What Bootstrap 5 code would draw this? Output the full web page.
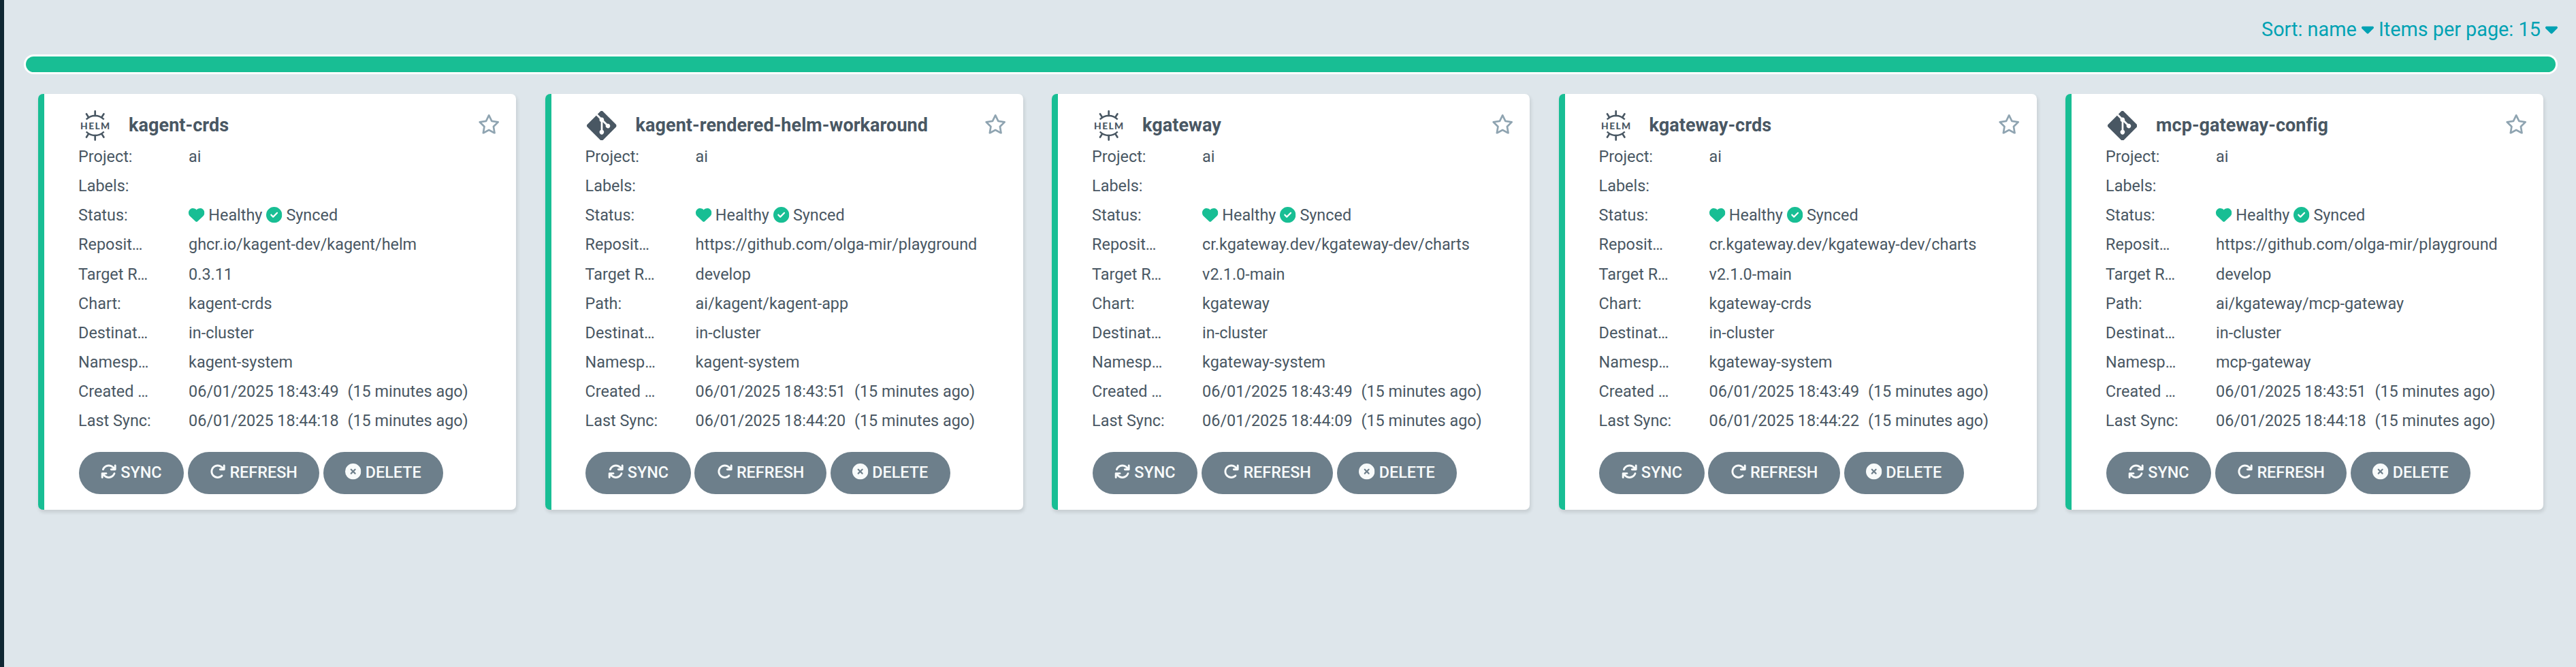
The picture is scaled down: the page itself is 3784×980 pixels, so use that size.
<!DOCTYPE html>
<html lang="en">
<head>
<meta charset="utf-8">
<meta name="viewport" content="width=device-width, initial-scale=1">
<title>Applications</title>
<link rel="stylesheet" href="https://cdn.jsdelivr.net/npm/bootstrap@5.3.0/dist/css/bootstrap.min.css">
<style>
  :root { --ink: #495763; --ok: #18be94; --accent: #00a2b3; --muted: #6d7f8b; --canvas: #dee6eb; }
  body { font-family: Roboto, sans-serif; font-size: 23.4px; line-height: 43.13px; color: var(--ink); background: var(--canvas); }
  .app-shell { height: 980px; overflow: hidden; }
  .side-rail { width: 6px; background: #0f2733; }
  .main-pane { padding: 0 27px 0 29.3px; }
  .list-tools { height: 80px; padding-top: 6px; font-size: 28.8px; line-height: 74px; color: var(--accent); }
  .list-tools a { color: inherit; }
  .fa-icon { height: 1em; width: 1em; vertical-align: -.125em; fill: currentColor; overflow: visible; }
  .fa-caret { width: .625em; }
  .health-bar { height: 29px; padding: 3px; background: #fff; border-radius: 15px; margin-bottom: 29px; }
  .health-bar .progress-bar { background: var(--ok); border-radius: 12px; }
  .tiles { display: grid; grid-template-columns: repeat(5, 702px); column-gap: 42.5px; padding-left: 20.8px; }
  .app-tile { height: 611px; border: 0; border-left: 9px solid var(--ok); border-radius: 7.2px; color: inherit; box-shadow: 1.8px 3.6px 5.4px rgba(0, 0, 0, .1); padding: 0 24px 0 50px; }
  .tile-head { height: 71px; padding-top: 18.6px; }
  .kind-slot { width: 74px; padding: 3px 0 0 2px; }
  .kind-slot svg { display: block; width: 45px; height: 45px; }
  .kind-slot svg.git-mark { width: 43.6px; height: 43.6px; margin: .7px; }
  .tile-name { font-size: 27px; font-weight: 700; line-height: 32px; letter-spacing: .05px; padding-top: 2px; }
  .fav { width: 32.4px; height: 28.8px; fill: #8fa4b1; }
  .field-name { width: 162px; }
  .ago { margin-left: 1.2px; }
  .ok-icon { color: var(--ok); }
  .tile-actions { gap: 5.8px; padding: 23.7px 0 0 .6px; }
  .act { --bs-btn-color: #f8fbfb; --bs-btn-bg: var(--muted); --bs-btn-border-width: 0; --bs-btn-font-size: 23.4px; --bs-btn-font-weight: 500; --bs-btn-padding-x: 32.4px; --bs-btn-padding-y: 0; --bs-btn-border-radius: 31px; --bs-btn-line-height: 57.8px; height: 61.8px; white-space: nowrap; }
</style>
</head>
<body>
<svg class="d-none" xmlns="http://www.w3.org/2000/svg">
  <symbol id="heart" viewBox="0 0 512 512"><path d="M47.6 300.4L228.3 469.1c7.5 7 17.4 10.9 27.7 10.9s20.2-3.9 27.7-10.9L464.4 300.4c30.4-28.3 47.6-68 47.6-109.5v-5.8c0-69.9-50.5-129.5-119.4-141C347 36.500 300.600 51.400 268 84L256 96 244 84c-32.600-32.600-79-47.500-124.600-39.900C50.500 55.600 0 115.200 0 185.100v5.800c0 41.500 17.200 81.200 47.600 109.500z"/></symbol>
  <symbol id="check" viewBox="0 0 512 512"><path d="M256 512A256 256 0 1 0 256 0a256 256 0 1 0 0 512zM369 209L241 337c-9.400 9.400-24.600 9.400-33.900 0l-64-64c-9.400-9.400-9.400-24.600 0-33.900s24.600-9.400 33.900 0l47 47L335 175c9.400-9.400 24.600-9.400 33.900 0s9.400 24.600 0 33.900z"/></symbol>
  <symbol id="xmark" viewBox="0 0 512 512"><path d="M256 512A256 256 0 1 0 256 0a256 256 0 1 0 0 512zM175 175c9.400-9.400 24.600-9.400 33.900 0l47 47 47-47c9.400-9.400 24.600-9.400 33.900 0s9.400 24.600 0 33.900l-47 47 47 47c9.400 9.400 9.400 24.600 0 33.900s-24.600 9.400-33.900 0l-47-47-47 47c-9.400 9.400-24.600 9.400-33.900 0s-9.400-24.600 0-33.900l47-47-47-47c-9.400-9.400-9.400-24.600 0-33.900z"/></symbol>
  <symbol id="refresh" viewBox="0 0 512 512"><path d="M386.300 160H336c-17.700 0-32 14.300-32 32s14.300 32 32 32H464c17.700 0 32-14.300 32-32V64c0-17.700-14.300-32-32-32s-32 14.300-32 32v51.200L414.400 97.600c-87.500-87.500-229.300-87.500-316.800 0s-87.500 229.300 0 316.800s229.300 87.500 316.800 0c12.500-12.500 12.500-32.800 0-45.300s-32.800-12.500-45.300 0c-62.500 62.500-163.800 62.500-226.300 0s-62.500-163.800 0-226.300s163.800-62.500 226.300 0L386.300 160z"/></symbol>
  <symbol id="sync" viewBox="0 0 512 512"><path d="M105.100 202.600c7.700-21.800 20.200-42.300 37.800-59.800c62.500-62.500 163.800-62.500 226.300 0L386.300 160H336c-17.700 0-32 14.300-32 32s14.300 32 32 32H463.900c17.700 0 32-14.300 32-32V64c0-17.700-14.300-32-32-32s-32 14.300-32 32v51.200L414.400 97.600c-87.500-87.500-229.300-87.500-316.800 0C73.200 122 55.600 150.700 44.800 181.400c-5.900 16.700 2.900 34.900 19.500 40.800s34.900-2.900 40.800-19.500zM39 289.300c-5 1.500-9.800 4.200-13.700 8.200c-4 4-6.700 8.800-8.100 14c-.3 1.200-.6 2.500-.8 3.800c-.3 1.700-.4 3.400-.4 5.100V448c0 17.700 14.300 32 32 32s32-14.300 32-32V396.900l17.600 17.500c87.500 87.400 229.300 87.400 316.700 0c24.400-24.400 42.100-53.100 52.900-83.700c5.900-16.700-2.900-34.900-19.500-40.800s-34.900 2.900-40.800 19.500c-7.700 21.800-20.200 42.300-37.800 59.800c-62.500 62.500-163.800 62.500-226.300 0l-.1-.1L125.600 352H176c17.700 0 32-14.300 32-32s-14.300-32-32-32H48.400c-1.600 0-3.200 .1-4.800 .3s-3.100 .5-4.600 1z"/></symbol>
  <symbol id="caret" viewBox="0 0 320 512"><path d="M137.400 374.600c12.500 12.500 32.800 12.500 45.300 0l128-128c9.200-9.200 11.900-22.900 6.900-34.900s-16.600-19.800-29.600-19.800L32 192c-12.900 0-24.600 7.800-29.600 19.800s-2.200 25.700 6.900 34.900l128 128z"/></symbol>
  <symbol id="star" viewBox="0 0 576 512"><path d="M287.900 0c9.200 0 17.600 5.200 21.600 13.500l68.600 141.300 153.200 22.600c9 1.300 16.500 7.600 19.300 16.300s.5 18.100-5.900 24.500L433.600 328.400l26.200 155.600c1.500 9-2.200 18.100-9.700 23.500s-17.300 6-25.300 1.700l-137-73.200L151 509.100c-8.100 4.300-17.900 3.700-25.300-1.700s-11.200-14.500-9.700-23.500l26.200-155.600L31.100 218.200c-6.500-6.400-8.700-15.900-5.900-24.500s10.300-14.900 19.300-16.300l153.200-22.600L266.300 13.500C270.400 5.200 278.700 0 287.900 0zm0 79L235.400 187.200c-3.500 7.100-10.200 12.100-18.100 13.300L99 217.900 184.900 303c5.500 5.500 8.100 13.300 6.800 21L171.400 443.700l105.200-56.200c7.100-3.800 15.600-3.800 22.600 0l105.200 56.200L384.200 324.100c-1.300-7.700 1.200-15.500 6.800-21l85.900-85.100L358.600 200.500c-7.800-1.200-14.600-6.100-18.100-13.300L287.900 79z"/></symbol>
  <symbol id="git" viewBox="0 32 448 448"><path d="M439.550 236.050L244 40.450a28.870 28.870 0 0 0-40.810 0l-40.660 40.630 51.520 51.520c27.060-9.140 52.680 16.770 43.390 43.680l49.660 49.660c34.230-11.800 61.180 31 35.470 56.690-26.490 26.490-70.210-2.870-56-37.340L240.220 199v121.850c25.300 12.540 22.260 41.850 9.080 55a34.340 34.340 0 0 1-48.550 0c-17.570-17.600-11.070-46.910 11.250-56v-123c-20.800-8.510-24.600-30.740-18.640-45L142.570 101 8.450 235.140a28.860 28.860 0 0 0 0 40.810l195.610 195.600a28.860 28.860 0 0 0 40.800 0l194.690-194.690a28.860 28.860 0 0 0 0-40.810z"/></symbol>
  <symbol id="helm" viewBox="0 0 45 45">
    <g fill="none" stroke="currentColor" stroke-width="2.400" stroke-linecap="round">
      <path stroke-linecap="butt" d="M9.700 13.500a18.100 18.100 0 0 1 26 0M9.700 31.500a18.100 18.100 0 0 0 26 0"/>
      <path stroke-width="2.700" d="M22.700 1.400V8M10 5.500L12.800 9.900M35.400 5.500L32.600 9.900M22.700 43.600V37M10 39.500L12.800 35.100M35.400 39.500L32.600 35.100"/>
    </g>
    <text x="1 13.300 22.400 31" y="27.600" font-family="Lato, sans-serif" font-weight="900" font-size="13.800" fill="currentColor">HELM</text>
  </symbol>
</svg>

<div class="app-shell d-flex">
  <aside class="side-rail flex-shrink-0"></aside>
  <main class="main-pane flex-grow-1">
    <div class="list-tools text-end text-nowrap"><a class="text-decoration-none" href="#">Sort: name <svg class="fa-icon fa-caret"><use href="#caret"/></svg></a> <a class="text-decoration-none" href="#">Items per page: 15 <svg class="fa-icon fa-caret"><use href="#caret"/></svg></a></div>
    <div class="health-bar d-flex"><div class="progress-bar w-100"></div></div>
    <div class="tiles" id="tiles"></div>
  </main>
</div>

<script src="https://cdn.jsdelivr.net/npm/bootstrap@5.3.0/dist/js/bootstrap.bundle.min.js"></script>
<script>
  const apps = [
    { name: 'kagent-crds', kind: 'helm', repo: 'ghcr.io/kagent-dev/kagent/helm', rev: '0.3.11', src: 'kagent-crds', ns: 'kagent-system', created: '18:43:49', synced: '18:44:18' },
    { name: 'kagent-rendered-helm-workaround', kind: 'git', repo: 'https://github.com/olga-mir/playground', rev: 'develop', src: 'ai/kagent/kagent-app', ns: 'kagent-system', created: '18:43:51', synced: '18:44:20' },
    { name: 'kgateway', kind: 'helm', repo: 'cr.kgateway.dev/kgateway-dev/charts', rev: 'v2.1.0-main', src: 'kgateway', ns: 'kgateway-system', created: '18:43:49', synced: '18:44:09' },
    { name: 'kgateway-crds', kind: 'helm', repo: 'cr.kgateway.dev/kgateway-dev/charts', rev: 'v2.1.0-main', src: 'kgateway-crds', ns: 'kgateway-system', created: '18:43:49', synced: '18:44:22' },
    { name: 'mcp-gateway-config', kind: 'git', repo: 'https://github.com/olga-mir/playground', rev: 'develop', src: 'ai/kgateway/mcp-gateway', ns: 'mcp-gateway', created: '18:43:51', synced: '18:44:18' }
  ];
  const icon = (id, cls = '') => `<svg class="fa-icon ${cls}"><use href="#${id}"/></svg>`;
  const field = (name, value) => `<div class="d-flex text-nowrap"><div class="field-name flex-shrink-0">${name}</div><div>${value}</div></div>`;
  const when = t => `06/01/2025 ${t}&nbsp; <span class="ago">(15 minutes ago)</span>`;
  const action = (id, label) => `<button type="button" class="btn act d-inline-block">${icon(id)} ${label}</button>`;
  document.getElementById('tiles').innerHTML = apps.map(a => `
    <article class="card app-tile">
      <div class="tile-head d-flex align-items-center">
        <div class="kind-slot flex-shrink-0"><svg class="${a.kind}-mark" fill="currentColor"><use href="#${a.kind}"/></svg></div>
        <div class="tile-name flex-grow-1">${a.name}</div>
        <svg class="fav flex-shrink-0"><use href="#star"/></svg>
      </div>
      ${field('Project:', 'ai')}
      ${field('Labels:', '&nbsp;')}
      ${field('Status:', `${icon('heart', 'ok-icon')} Healthy ${icon('check', 'ok-icon')} Synced`)}
      ${field('Reposit…', a.repo)}
      ${field('Target R…', a.rev)}
      ${field(a.kind === 'helm' ? 'Chart:' : 'Path:', a.src)}
      ${field('Destinat…', 'in-cluster')}
      ${field('Namesp…', a.ns)}
      ${field('Created …', when(a.created))}
      ${field('Last Sync:', when(a.synced))}
      <div class="tile-actions d-flex">${action('sync', 'SYNC')}${action('refresh', 'REFRESH')}${action('xmark', 'DELETE')}</div>
    </article>`).join('');
</script>
</body>
</html>
